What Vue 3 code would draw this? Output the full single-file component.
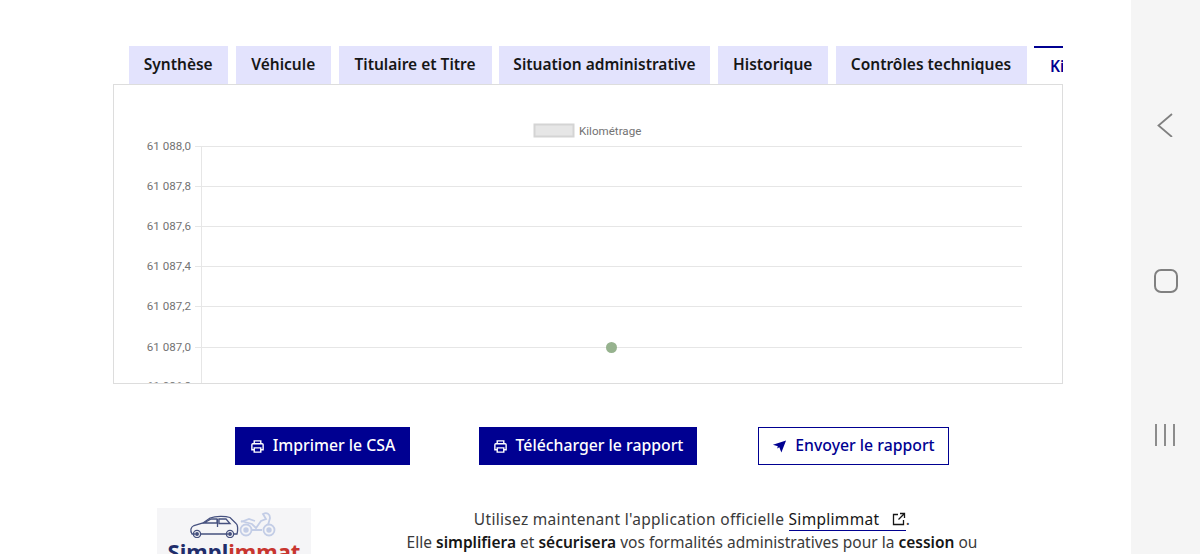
<script setup>
const tabs = [
  { label: 'Synthèse', w: 99.5 },
  { label: 'Véhicule', w: 95.5 },
  { label: 'Titulaire et Titre', w: 153 },
  { label: 'Situation administrative', w: 211 },
  { label: 'Historique', w: 110.5 },
  { label: 'Contrôles techniques', w: 191 },
]
const ticks = [
  { y: 146.5, t: '61 088,0' },
  { y: 186.5, t: '61 087,8' },
  { y: 226.5, t: '61 087,6' },
  { y: 266.5, t: '61 087,4' },
  { y: 306.5, t: '61 087,2' },
  { y: 347.5, t: '61 087,0' },
  { y: 386, t: '61 086,8' },
]
</script>

<template>
  <div class="screen">
    <main class="page">
      <div class="tabs">
        <button v-for="t in tabs" :key="t.label" class="tab" :style="{ width: t.w + 'px' }">{{ t.label }}</button>
        <button class="tab active">Kilométrage</button>
      </div>
      <section class="panel">
        <svg class="chart" width="948" height="298" viewBox="114 85 948 298">
          <rect x="534.5" y="124.5" width="39" height="12" fill="#e6e6e6" stroke="#d4d4d4" stroke-width="2" />
          <text x="579" y="135" class="legend">Kilométrage</text>
          <line x1="201.5" y1="146" x2="201.5" y2="384" stroke="#e6e6e6" />
          <g v-for="k in ticks" :key="k.t">
            <line x1="195" :y1="k.y" x2="1022" :y2="k.y" stroke="#e6e6e6" />
            <text x="191" :y="k.y + 3.5" text-anchor="end" class="tick">{{ k.t }}</text>
          </g>
          <circle cx="611.5" cy="347.5" r="5.5" fill="#96b28e" />
        </svg>
      </section>
      <div class="actions">
        <button class="btn primary first">
          <svg class="ico" width="15" height="15" viewBox="0 0 16 16" fill="none" stroke="currentColor" stroke-width="1.5">
            <path d="M4.500 11.500H2V6a1 1 0 0 1 1-1h10a1 1 0 0 1 1 1v5.500h-2.500" />
            <path d="M4.500 5V2h7v3M4.500 9.500h7V14h-7z" />
          </svg>
          <span class="lbl">Imprimer le CSA</span>
        </button>
        <button class="btn primary second">
          <svg class="ico" width="15" height="15" viewBox="0 0 16 16" fill="none" stroke="currentColor" stroke-width="1.5">
            <path d="M4.500 11.500H2V6a1 1 0 0 1 1-1h10a1 1 0 0 1 1 1v5.500h-2.500" />
            <path d="M4.500 5V2h7v3M4.500 9.500h7V14h-7z" />
          </svg>
          <span class="lbl">Télécharger le rapport</span>
        </button>
        <button class="btn outline third">
          <svg class="ico" width="15" height="15" viewBox="0 0 16 16" fill="currentColor">
            <path d="M15 1.500 10 14.500 7.800 8.800 5.500 10.200 6.200 7.800 1 6z" />
          </svg>
          <span class="lbl">Envoyer le rapport</span>
        </button>
      </div>
      <div class="promo">
        <div class="logo">
          <svg width="154" height="30" viewBox="0 0 154 30" fill="none" class="vehicles">
            <g stroke="#46517f" stroke-width="1.300">
              <path d="M38 26h-3c-2-3-1.500-7 2-8.500l9-2.500 7-5c6-2 15-2 20-.5l6 6c2 1 2 7 1 10.500h-3M71 26H43" />
              <path d="M47 15l7-4h6v4zM62 11h7l4 4.500H62zM60.500 11v8" />
              <circle cx="40" cy="26" r="3.600" /><circle cx="73" cy="26" r="3.600" />
              <circle cx="40" cy="26" r="1.300" fill="#46517f" /><circle cx="73" cy="26" r="1.300" fill="#46517f" />
            </g>
            <g stroke="#c3cde6" stroke-width="1.800">
              <circle cx="89" cy="22" r="5.500" /><circle cx="112" cy="22" r="5.500" />
              <circle cx="89" cy="22" r="1.800" fill="#c3cde6" /><circle cx="112" cy="22" r="1.800" fill="#c3cde6" />
              <path d="M84 13l11 3 4 4 5-7 5-2-3-5c4-2 7 0 7 4l-2 7" />
              <path d="M94 22h11M84 14l8-3 6 2" />
            </g>
          </svg>
          <div class="brand"><span class="navy">Simpl</span><span class="red">immat</span></div>
        </div>
        <div class="copy">
          <p class="lead">Utilisez maintenant l'application officielle <a class="link">Simplimmat
            <svg width="14" height="14" viewBox="0 0 14 14" fill="none" stroke="#161616" stroke-width="1.300"><path d="M6 2.500H1.500v10h10V8M8 1.500h4.500V6M12.500 1.500 6.500 7.500" /></svg></a>.</p>
          <p>Elle <b>simplifiera</b> et <b>sécurisera</b> vos formalités administratives pour la <b>cession</b> ou</p>
        </div>
      </div>
    </main>
    <aside class="navbar">
      <svg width="16" height="24" viewBox="0 0 16 24" fill="none" stroke="#808080" stroke-width="1.800" class="back"><path d="M15 1 1.500 12.500 15 24" /></svg>
      <span class="home"></span>
      <div class="recent"><i></i><i></i><i></i></div>
    </aside>
  </div>
</template>

<style>
html, body { margin: 0; background: #fff; }
</style>

<style scoped>
.screen {
  display: flex;
  width: 1200px;
  height: 554px;
  overflow: hidden;
  font-family: "Noto Sans", sans-serif;
  color: #161616;
}
.page {
  width: 1131px;
  padding: 46px 0 0 113px;
  box-sizing: border-box;
  overflow: hidden;
}
.tabs {
  display: flex;
  gap: 7.5px;
  width: 950px;
  height: 38px;
  padding-left: 15.5px;
  box-sizing: border-box;
  overflow: hidden;
}
.tab {
  flex: none;
  height: 38px;
  padding: 0 0 2px;
  border: 0;
  background: #e3e3fd;
  color: #161616;
  font: 600 15.500px/36px "Noto Sans", sans-serif;
  white-space: nowrap;
}
.tab.active {
  width: 110px;
  background: #fff;
  color: #000091;
  border-top: 2px solid #000091;
  padding: 0 0 0 16px;
  text-align: left;
  line-height: 34px;
}
.panel {
  width: 950px;
  height: 300px;
  box-sizing: border-box;
  border: 1px solid #dddddd;
  overflow: hidden;
}
.chart { display: block; }
.legend { font: 11.6px Roboto, sans-serif; fill: #737373; }
.tick { font: 11.6px Roboto, sans-serif; fill: #737373; }
.actions {
  display: flex;
  margin-top: 43px;
  height: 38px;
}
.btn {
  display: flex;
  align-items: center;
  justify-content: center;
  gap: 8px;
  height: 38px;
  box-sizing: border-box;
  padding: 0;
  font: 500 15.800px "Noto Sans", sans-serif;
  white-space: nowrap;
}
.lbl { position: relative; top: -1px; }
.primary { background: #000091; color: #fff; border: 0; }
.outline { background: #fff; color: #000091; border: 1px solid #000091; }
.first { width: 175px; margin-left: 122px; }
.second { width: 218px; margin-left: 69px; }
.third { width: 191px; margin-left: 61px; }
.ico { flex: none; }
.promo {
  display: flex;
  margin-top: 43px;
}
.logo {
  flex: none;
  width: 154px;
  height: 60px;
  margin-left: 44px;
  box-sizing: border-box;
  background: #f5f5f7;
  text-align: center;
}
.vehicles { display: block; }
.brand { font: 700 22px/26px "Noto Sans", sans-serif; }
.navy { color: #1f2d6b; }
.red { color: #c8352f; }
.copy {
  width: 640px;
  margin-left: 61px;
  text-align: center;
  font-size: 15.500px;
  line-height: 23px;
  color: #3a3a3a;
}
.copy p { margin: 0; white-space: nowrap; }
.copy .lead { letter-spacing: 0.3px; }
.copy b { color: #161616; font-weight: 600; }
.link {
  color: #161616;
  border-bottom: 1px solid #000091;
}
.link svg { margin-left: 8px; vertical-align: -1px; }
.navbar {
  position: relative;
  flex: none;
  width: 69px;
  background: #f5f5f5;
}
.back { position: absolute; left: 26px; top: 113px; }
.home {
  position: absolute;
  left: 23px;
  top: 269px;
  width: 20px;
  height: 20px;
  border: 2px solid #808080;
  border-radius: 7px;
}
.recent {
  position: absolute;
  left: 24px;
  top: 424px;
  display: flex;
  gap: 7px;
}
.recent i {
  display: block;
  width: 2px;
  height: 22px;
  background: #8c8c8c;
}
</style>
